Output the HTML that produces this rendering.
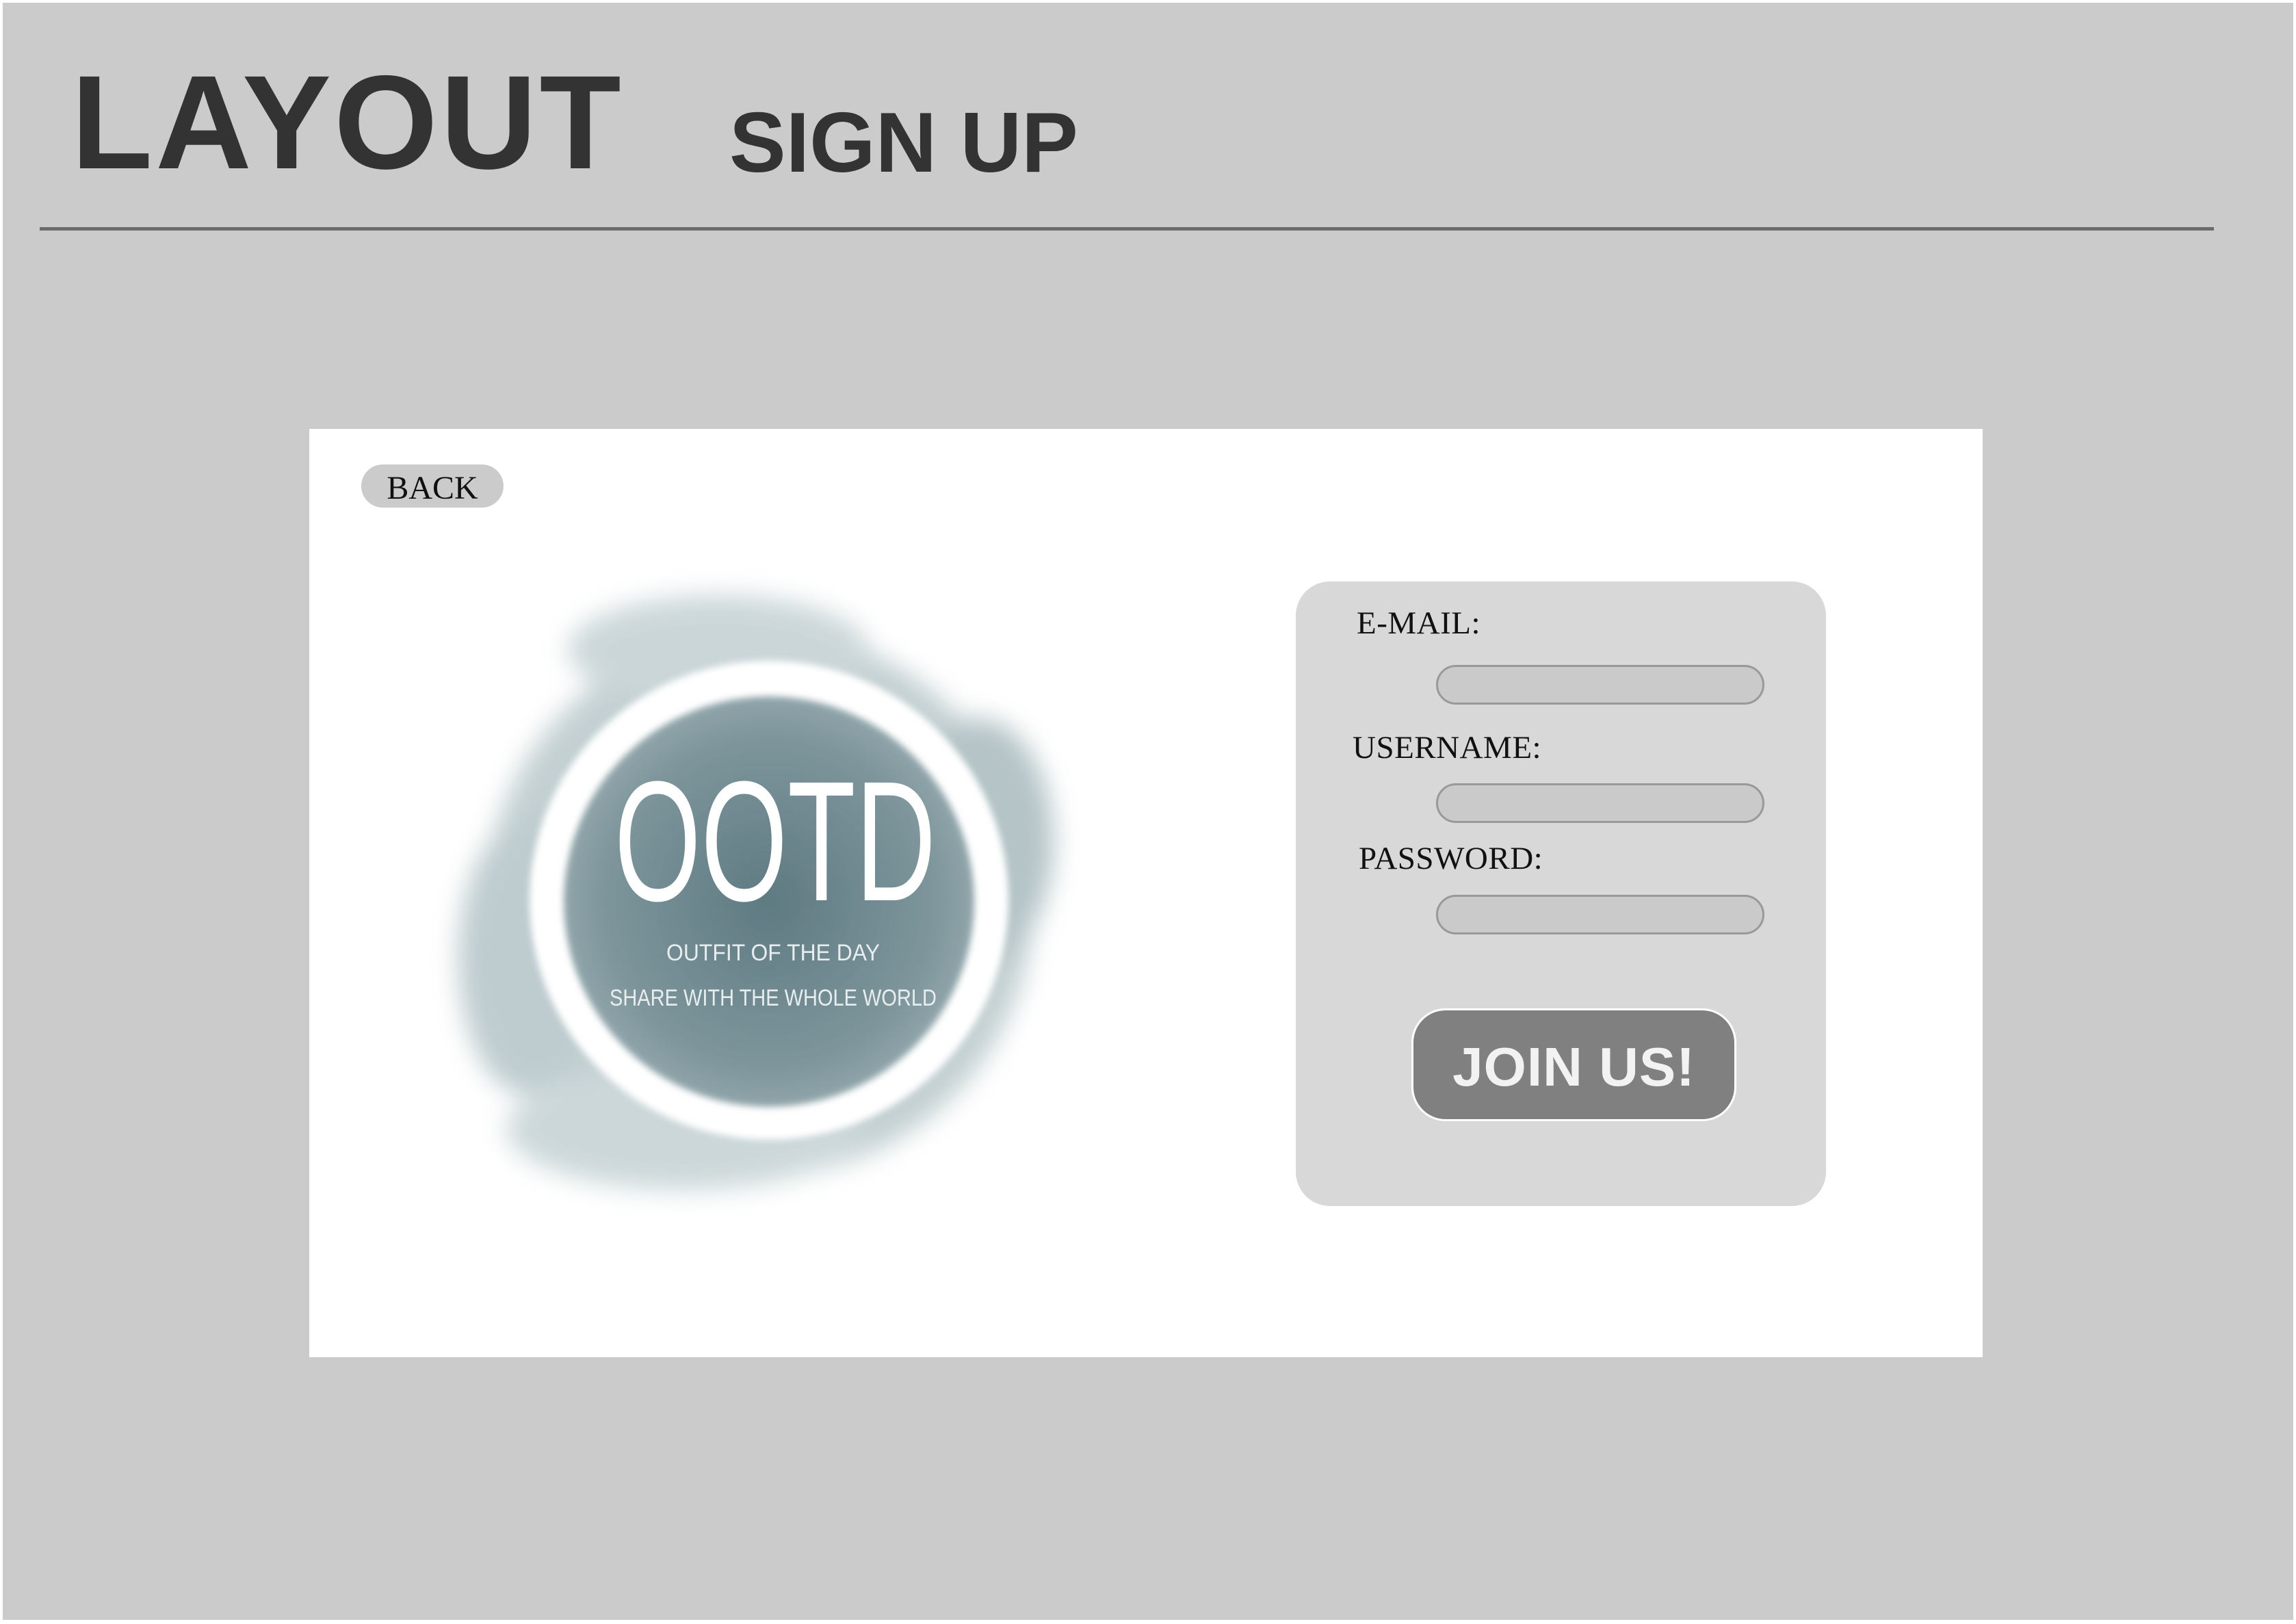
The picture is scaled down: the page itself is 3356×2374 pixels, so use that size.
<!DOCTYPE html>
<html><head><meta charset="utf-8"><style>
html,body{margin:0;padding:0}
body{width:3356px;height:2374px;background:#fff;position:relative;overflow:hidden;font-family:"Liberation Sans",sans-serif}
.frame{position:absolute;left:4px;top:4px;width:3348px;height:2364px;background:#cbcbcb}
.t1{position:absolute;left:104px;top:82px;font-size:195px;font-weight:bold;color:#333;line-height:1;letter-spacing:4px}
.t2{position:absolute;left:1066px;top:147px;font-size:124px;font-weight:bold;color:#333;line-height:1;letter-spacing:0px}
.line{position:absolute;left:58px;top:332px;width:3178px;height:5px;background:#6b6b6b}
.panel{position:absolute;left:452px;top:627px;width:2446px;height:1357px;background:#fff}
.back{position:absolute;left:528px;top:679px;width:208px;height:63px;border-radius:32px;background:#cbcbcb;font-family:"Liberation Serif",serif;font-size:48px;text-align:center;line-height:70px;color:#111}
.form{position:absolute;left:1894px;top:850px;width:775px;height:913px;background:#d8d8d8;border-radius:50px}
.lbl{position:absolute;font-family:"Liberation Serif",serif;font-size:47px;color:#111;letter-spacing:0.5px;line-height:1}
.inp{position:absolute;left:2099px;width:474px;height:52px;border:3px solid #999;border-radius:30px;background:#cacaca}
.btn{position:absolute;left:2063px;top:1474px;width:475px;height:165px;box-sizing:border-box;border:3px solid #fff;border-radius:50px;background:#808080;color:#f2f2f2;font-weight:bold;font-size:80px;text-align:center;line-height:166px;letter-spacing:1px}
svg{position:absolute;left:0;top:0}
</style></head><body>
<div class="frame"></div>
<div class="t1">LAYOUT</div>
<div class="t2">SIGN UP</div>
<div class="line"></div>
<div class="panel"></div>
<div class="back">BACK</div>
<svg width="3356" height="2374" viewBox="0 0 3356 2374">
<defs>
<filter id="b1" x="-30%" y="-30%" width="160%" height="160%"><feGaussianBlur stdDeviation="18"/></filter>
<filter id="b2" x="-30%" y="-30%" width="160%" height="160%"><feGaussianBlur stdDeviation="5"/></filter>
<radialGradient id="g1" cx="0.5" cy="0.5" r="0.5"><stop offset="0" stop-color="#5f7a82"/><stop offset="0.8" stop-color="#7d959b"/><stop offset="1" stop-color="#90a5aa"/></radialGradient>
</defs>
<g filter="url(#b1)" opacity="0.85">
<ellipse cx="1110" cy="1320" rx="400" ry="400" fill="#b9c8cb"/>
<ellipse cx="1050" cy="950" rx="220" ry="80" fill="#c3d0d3"/>
<ellipse cx="770" cy="1400" rx="100" ry="200" fill="#b3c3c7"/>
<ellipse cx="1430" cy="1230" rx="110" ry="180" fill="#a8babe"/>
<ellipse cx="1000" cy="1650" rx="260" ry="90" fill="#c4d1d4"/>
</g>
<circle cx="1124" cy="1316" r="350" fill="#fff" filter="url(#b2)"/>
<circle cx="1124" cy="1318" r="300" fill="url(#g1)" filter="url(#b2)"/>
<text x="1133" y="1316" text-anchor="middle" font-family="'Liberation Sans',sans-serif" font-size="250" fill="#fff" textLength="470" lengthAdjust="spacingAndGlyphs">OOTD</text>
<text x="1130" y="1404" text-anchor="middle" font-family="'Liberation Sans',sans-serif" font-size="34" fill="#e8eeef" textLength="312" lengthAdjust="spacingAndGlyphs">OUTFIT OF THE DAY</text>
<text x="1130" y="1470" text-anchor="middle" font-family="'Liberation Sans',sans-serif" font-size="34" fill="#e8eeef" textLength="478" lengthAdjust="spacingAndGlyphs">SHARE WITH THE WHOLE WORLD</text>
</svg>
<div class="form"></div>
<div class="lbl" style="left:1983px;top:888px">E-MAIL:</div>
<div class="inp" style="top:972px"></div>
<div class="lbl" style="left:1977px;top:1070px">USERNAME:</div>
<div class="inp" style="top:1145px"></div>
<div class="lbl" style="left:1986px;top:1232px">PASSWORD:</div>
<div class="inp" style="top:1308px"></div>
<div class="btn">JOIN US!</div>
</body></html>
